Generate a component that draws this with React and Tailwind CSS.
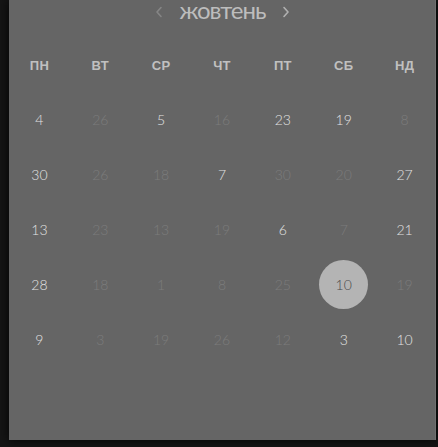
import React from "react";

const rows = [
  [["4", "c"], ["26", "o"], ["5", "c"], ["16", "o"], ["23", "c"], ["19", "c"], ["8", "o"]],
  [["30", "c"], ["26", "o"], ["18", "o"], ["7", "c"], ["30", "o"], ["20", "o"], ["27", "c"]],
  [["13", "c"], ["23", "o"], ["13", "o"], ["19", "o"], ["6", "c"], ["7", "o"], ["21", "c"]],
  [["28", "c"], ["18", "o"], ["1", "o"], ["8", "o"], ["25", "o"], ["10", "s"], ["19", "o"]],
  [["9", "c"], ["3", "o"], ["19", "o"], ["26", "o"], ["12", "o"], ["3", "c"], ["10", "c"]],
];

const days = ["ПН", "ВТ", "СР", "ЧТ", "ПТ", "СБ", "НД"];

function Chevron({ dir, color }) {
  return (
    <svg width="8" height="12" viewBox="0 0 8 12" fill="none">
      <path
        d={dir === "left" ? "M6 1.5 L2 6 L6 10.5" : "M2 1.5 L6 6 L2 10.5"}
        stroke={color}
        strokeWidth="1.6"
        strokeLinecap="round"
        strokeLinejoin="round"
      />
    </svg>
  );
}

export default function App() {
  return (
    <div className="w-[438px] h-[447px] bg-[#151515] overflow-hidden">
      <div className="ml-[9px] w-[427px] h-[440px] bg-[#656565] shadow-[0_0_10px_rgba(0,0,0,0.9)] border-r border-[#707070] font-['Lato',sans-serif]">
        <div className="h-[24px] pl-[1px] flex items-center justify-center gap-[16px]">
          <Chevron dir="left" color="#858585" />
          <span className="text-[24px] leading-[20px] mb-[4px] tracking-[-1px] text-[#bdbdbd]">жовтень</span>
          <Chevron dir="right" color="#b0b0b0" />
        </div>
        <div className="mt-[32px] grid grid-cols-7 h-[20px] items-center">
          {days.map((d) => (
            <div
              key={d}
              className="text-center text-[13px] font-bold text-[#c0c0c0] font-['Liberation_Sans',sans-serif] tracking-[0.3px]"
            >
              {d}
            </div>
          ))}
        </div>
        <div className="mt-[16px]">
          {rows.map((r, i) => (
            <div key={i} className="grid grid-cols-7 h-[55px] items-center">
              {r.map(([n, t], j) => (
                <div key={j} className="flex items-center justify-center">
                  {t === "s" ? (
                    <div className="w-[49px] h-[49px] rounded-full bg-[#b4b4b4] flex items-center justify-center text-[14px] font-light text-[#4a4a4a]">
                      {n}
                    </div>
                  ) : (
                    <span
                      className={
                        "text-[14px] font-light " +
                        (t === "c" ? "text-[#e2e2e2]" : "text-[#7c7c7c]")
                      }
                    >
                      {n}
                    </span>
                  )}
                </div>
              ))}
            </div>
          ))}
        </div>
      </div>
    </div>
  );
}
